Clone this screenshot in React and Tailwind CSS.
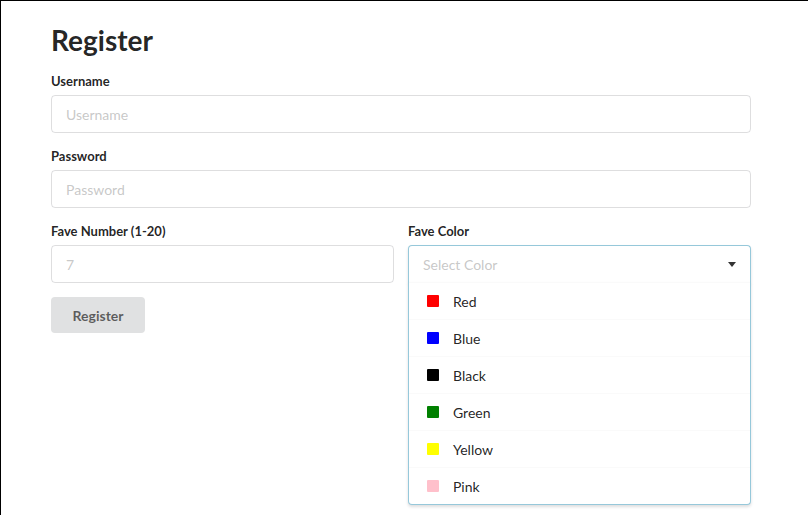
import React from "react";

const colors = [
  { name: "Red", hex: "#ff0000" },
  { name: "Blue", hex: "#0000ff" },
  { name: "Black", hex: "#000000" },
  { name: "Green", hex: "#008000" },
  { name: "Yellow", hex: "#ffff00" },
  { name: "Pink", hex: "#ffc0cb" },
];

function Field({ label, placeholder, className = "" }) {
  return (
    <div className={`flex flex-col ${className}`}>
      <label className="text-[13px] leading-[19px] font-bold text-[rgba(0,0,0,0.87)] mb-[4px]">
        {label}
      </label>
      <input
        placeholder={placeholder}
        className="h-[38px] w-full rounded-[4px] border border-[rgba(34,36,38,0.15)] px-[14px] text-[14px] text-[rgba(0,0,0,0.87)] placeholder:text-[rgba(191,191,191,0.87)] outline-none"
      />
    </div>
  );
}

function ColorDropdown() {
  return (
    <div className="flex flex-col flex-1">
      <label className="text-[13px] leading-[19px] font-bold text-[rgba(0,0,0,0.87)] mb-[4px]">
        Fave Color
      </label>
      <div className="relative">
        <div className="h-[38px] flex items-center justify-between rounded-t-[4px] border border-[#96c8da] border-b-0 px-[14px] shadow-[0_2px_3px_0_rgba(34,36,38,0.15)]">
          <span className="text-[14px] text-[rgba(191,191,191,0.87)]">Select Color</span>
          <svg width="8" height="5" viewBox="0 0 8 5">
            <path d="M0 0 L8 0 L4 5 Z" fill="rgba(0,0,0,0.8)" />
          </svg>
        </div>
        <div className="absolute left-0 right-0 top-[37px] bg-white border border-t-0 border-[#96c8da] rounded-b-[4px] shadow-[0_2px_3px_0_rgba(34,36,38,0.15)] z-10">
          {colors.map((c) => (
            <div
              key={c.name}
              className="h-[37px] flex items-center border-t border-[#fafafa] pl-[18px] text-[14px] text-[rgba(0,0,0,0.87)]"
            >
              <span
                className="w-[12px] h-[12px] rounded-[1px] mr-[14px]"
                style={{ backgroundColor: c.hex }}
              />
              {c.name}
            </div>
          ))}
        </div>
      </div>
    </div>
  );
}

export default function App() {
  return (
    <div className="min-h-[515px] bg-white border-l border-t border-black font-['Lato',sans-serif]">
      <div className="ml-[50px] w-[700px] pt-[21px]">
        <h1 className="text-[28px] leading-[36px] font-bold text-[rgba(0,0,0,0.87)] mb-[14px]">
          Register
        </h1>
        <Field label="Username" placeholder="Username" className="mb-[14px]" />
        <Field label="Password" placeholder="Password" className="mb-[14px]" />
        <div className="flex gap-[14px] mb-[14px]">
          <Field label="Fave Number (1-20)" placeholder="7" className="flex-1" />
          <ColorDropdown />
        </div>
        <button className="h-[36px] w-[94px] rounded-[4px] bg-[#e0e1e2] text-[14px] font-bold text-[rgba(0,0,0,0.6)]">
          Register
        </button>
      </div>
    </div>
  );
}
